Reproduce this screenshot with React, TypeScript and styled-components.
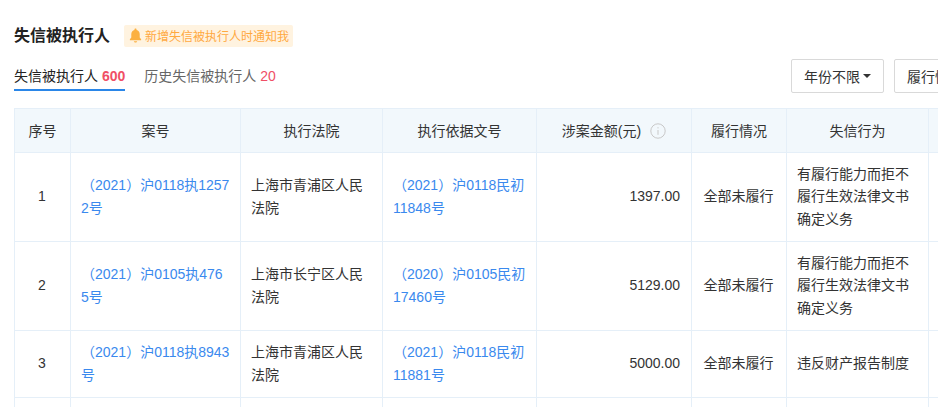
import React from "react";
import styled, { createGlobalStyle } from "styled-components";

const GlobalStyle = createGlobalStyle`
  html, body {
    margin: 0;
    background: #fff;
    overflow: hidden;
    height: 407px;
  }
  body {
    font-family: "Liberation Sans", "Noto Sans CJK SC", sans-serif;
    font-size: 14px;
    color: #333;
  }
`;

type Row = {
  no: number;
  caseNo: string;
  court: string;
  basis: string;
  amount: string;
  status: string;
  act: string;
  height: number;
};

const rows: Row[] = [
  {
    no: 1,
    caseNo: "（2021）沪0118执12572号",
    court: "上海市青浦区人民法院",
    basis: "（2021）沪0118民初11848号",
    amount: "1397.00",
    status: "全部未履行",
    act: "有履行能力而拒不履行生效法律文书确定义务",
    height: 89,
  },
  {
    no: 2,
    caseNo: "（2021）沪0105执4765号",
    court: "上海市长宁区人民法院",
    basis: "（2020）沪0105民初17460号",
    amount: "5129.00",
    status: "全部未履行",
    act: "有履行能力而拒不履行生效法律文书确定义务",
    height: 89,
  },
  {
    no: 3,
    caseNo: "（2021）沪0118执8943号",
    court: "上海市青浦区人民法院",
    basis: "（2021）沪0118民初11881号",
    amount: "5000.00",
    status: "全部未履行",
    act: "违反财产报告制度",
    height: 67,
  },
];

const App: React.FC = () => {
  return (
    <Page>
      <GlobalStyle />
      <TitleRow>
        <Title>失信被执行人</Title>
        <Notice>
          <BellIcon viewBox="0 0 16 16">
            <path d="M8 .5c.7 0 1.100.5 1.100 1v.6c2.100.5 3.400 2.300 3.400 4.600v3.300l1.500 2v1H2v-1l1.500-2V6.700c0-2.300 1.300-4.100 3.400-4.600v-.6c0-.5.4-1 1.100-1z" />
            <path d="M6.200 14.200h3.600c-.2.800-1 1.300-1.800 1.300s-1.600-.5-1.800-1.300z" />
          </BellIcon>
          新增失信被执行人时通知我
        </Notice>
      </TitleRow>
      <TabBar>
        <Tabs>
          <Tab $active>
            失信被执行人 <Count $bold>600</Count>
          </Tab>
          <Tab>
            历史失信被执行人 <Count>20</Count>
          </Tab>
        </Tabs>
        <Filters>
          <Filter>
            年份不限<Caret />
          </Filter>
          <Filter>
            履行情况不限<Caret />
          </Filter>
        </Filters>
      </TabBar>
      <Table>
        <colgroup>
          <col width={56} />
          <col width={170} />
          <col width={142} />
          <col width={154} />
          <col width={155} />
          <col width={95} />
          <col width={142} />
          <col width={120} />
        </colgroup>
        <thead>
          <tr>
            <Head>序号</Head>
            <Head>案号</Head>
            <Head>执行法院</Head>
            <Head>执行依据文号</Head>
            <Head>
              涉案金额(元)
              <InfoIcon viewBox="0 0 16 16">
                <circle cx="8" cy="8" r="7.200" />
                <path d="M8 7v4.800M8 4.200v1.200" />
              </InfoIcon>
            </Head>
            <Head>履行情况</Head>
            <Head>失信行为</Head>
            <Head />
          </tr>
        </thead>
        <tbody>
          {rows.map((row) => (
            <BodyRow key={row.no} $height={row.height}>
              <CenterCell>{row.no}</CenterCell>
              <Cell>
                <CaseLink>{row.caseNo}</CaseLink>
              </Cell>
              <Cell>{row.court}</Cell>
              <Cell>
                <CaseLink>{row.basis}</CaseLink>
              </Cell>
              <AmountCell>{row.amount}</AmountCell>
              <CenterCell>{row.status}</CenterCell>
              <Cell>{row.act}</Cell>
              <Cell />
            </BodyRow>
          ))}
          <BodyRow $height={40}>
            <Cell />
            <Cell />
            <Cell />
            <Cell />
            <Cell />
            <Cell />
            <Cell />
            <Cell />
          </BodyRow>
        </tbody>
      </Table>
    </Page>
  );
};

export default App;

const Page = styled.div`
  width: 938px;
  height: 407px;
  overflow: hidden;
  padding: 24px 0 0 14px;
  box-sizing: border-box;
`;

const TitleRow = styled.div`
  display: flex;
  align-items: center;
  height: 23px;
`;

const Title = styled.div`
  font-size: 16px;
  font-weight: 600;
  color: #222;
  line-height: 23px;
`;

const Notice = styled.div`
  display: flex;
  align-items: center;
  height: 22px;
  margin-left: 14px;
  padding: 0 4px;
  background: #fff3e0;
  border-radius: 2px;
  color: #ffa940;
  font-size: 12px;
  white-space: nowrap;
`;

const BellIcon = styled.svg`
  width: 15px;
  height: 15px;
  fill: #fbb040;
  margin-right: 2px;
`;

const TabBar = styled.div`
  display: flex;
  justify-content: space-between;
  margin-top: 13px;
  height: 48px;
  width: 1001px;
`;

const Tabs = styled.div`
  display: flex;
  gap: 19px;
  align-items: flex-start;
`;

const Tab = styled.div<{ $active?: boolean }>`
  height: 31px;
  box-sizing: border-box;
  padding-top: 6px;
  line-height: 20px;
  color: ${(p) => (p.$active ? "#222" : "#666")};
  border-bottom: 2px solid ${(p) => (p.$active ? "#2a86e8" : "transparent")};
  white-space: nowrap;
`;

const Count = styled.span<{ $bold?: boolean }>`
  color: #f04f66;
  font-weight: ${(p) => (p.$bold ? 700 : 400)};
`;

const Filters = styled.div`
  display: flex;
  gap: 10px;
  margin-top: -1px;
`;

const Filter = styled.div`
  display: flex;
  align-items: center;
  box-sizing: border-box;
  height: 34px;
  padding: 0 12px;
  border: 1px solid #d9d9d9;
  border-radius: 2px;
  color: #333;
  white-space: nowrap;
`;

const Caret = styled.span`
  width: 0;
  height: 0;
  margin-left: 3px;
  border-left: 4px solid transparent;
  border-right: 4px solid transparent;
  border-top: 4px solid #333;
`;

const Table = styled.table`
  border-collapse: collapse;
  table-layout: fixed;
  width: 1034px;
`;

const Head = styled.th`
  height: 44px;
  padding: 0 0 2px;
  box-sizing: border-box;
  background: #f2f8fc;
  border: 1px solid #e5eff8;
  font-weight: 400;
  color: #333;
  text-align: center;
`;

const InfoIcon = styled.svg`
  width: 16px;
  height: 16px;
  margin-left: 9px;
  vertical-align: -3px;
  fill: none;
  stroke: #c8c8c8;
  stroke-width: 1;
`;

const BodyRow = styled.tr<{ $height: number }>`
  height: ${(p) => p.$height}px;
`;

const Cell = styled.td`
  padding: 0 10px 1px;
  border: 1px solid #e5eff8;
  line-height: 22.4px;
  color: #333;
  word-break: break-all;
`;

const CenterCell = styled(Cell)`
  padding-right: 11px;
  text-align: center;
`;

const AmountCell = styled(Cell)`
  padding-right: 11px;
  text-align: right;
`;

const CaseLink = styled.a`
  color: #3a89ee;
`;
